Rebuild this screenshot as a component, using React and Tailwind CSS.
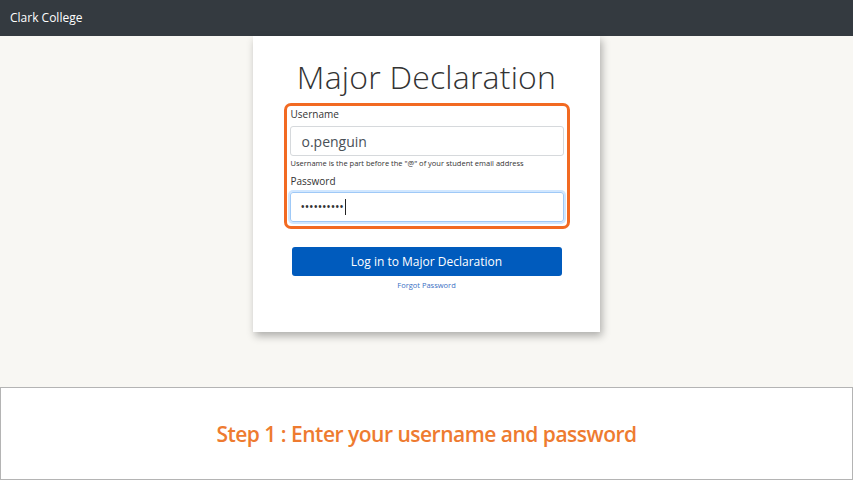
export default function App() {
  const font = { fontFamily: '"Open Sans", "Noto Sans", sans-serif' };
  return (
    <div className="w-[853px] h-[480px] flex flex-col bg-[#f8f7f3] overflow-hidden" style={font}>
      <div className="h-[36px] bg-[#343a40] flex items-center px-[10px] shrink-0">
        <span className="text-white text-[12px]">Clark College</span>
      </div>
      <div className="flex-1 flex justify-center">
        <div className="w-[347px] h-[296px] bg-white shadow-[2px_4px_8px_rgba(0,0,0,0.3)] flex flex-col items-center pt-[13px]">
          <h1 className="text-[32px] font-light text-[#333] leading-[56px] tracking-[0.2px]">Major Declaration</h1>
          <div className="w-[286px] mt-[-2px] border-[3px] border-[#f26a22] rounded-[7px] px-[3px] pt-[1px] pb-[4px] flex flex-col">
            <label className="text-[10px] text-[#333] leading-[14px] pl-[1px]">Username</label>
            <div className="mt-[5px] h-[30px] border border-[#d6d9dc] rounded-[3px] flex items-center px-[11px] text-[14px] text-[#495057]">o.penguin</div>
            <div className="text-[7.5px] text-[#333] leading-[12px] mt-[1px] pl-[1px]">Username is the part before the "@" of your student email address</div>
            <label className="text-[10px] text-[#333] leading-[14px] mt-[5px] pl-[1px]">Password</label>
            <div className="mt-[4px] h-[30px] border border-[#9fc9f7] shadow-[0_0_0_2px_rgba(0,123,255,0.18)] rounded-[3px] flex items-center px-[10px] text-[12px] text-[#333] tracking-[-0.2px]">
              <span>••••••••••</span>
              <span className="w-px h-[16px] bg-[#222] ml-[1px]"></span>
            </div>
          </div>
          <button className="mt-[18px] w-[270px] h-[29px] rounded-[3px] bg-[#005bbd] text-white text-[12px] flex items-center justify-center">Log in to Major Declaration</button>
          <a className="mt-[3px] text-[7.5px] text-[#3a6fc4] leading-[12px]">Forgot Password</a>
        </div>
      </div>
      <div className="h-[93px] bg-white border border-[#b4b4b4] flex items-center justify-center shrink-0 pt-[3px]">
        <span className="text-[21px] font-semibold text-[#ee7b30] tracking-[-0.5px]">Step 1 : Enter your username and password</span>
      </div>
    </div>
  );
}
